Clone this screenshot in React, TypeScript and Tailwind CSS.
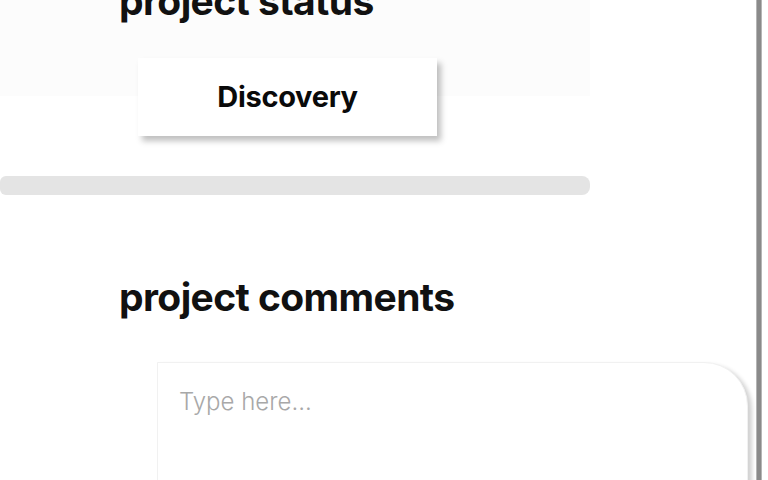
import React from "react";

const font = { fontFamily: "Inter, 'Noto Sans', sans-serif" };

export default function App() {
  return (
    <div className="flex h-[480px] w-[768px] overflow-hidden bg-white" style={font}>
      {/* main column */}
      <div className="flex w-[756px] flex-col">
        {/* project status */}
        <section className="w-[590px] shrink-0 bg-[linear-gradient(to_bottom,#fcfcfc_96px,#ffffff_96px)] pl-[119px]">
          <h2 className="-mt-[19px] text-[39px] font-bold leading-none tracking-[-0.6px] text-[#111111]">
            project status
          </h2>
          <button className="ml-[19px] mt-[38px] flex h-[78px] w-[299px] items-center justify-center bg-white text-[29px] font-bold tracking-[-0.3px] text-[#0a0a0a] shadow-[4px_5px_6px_rgba(0,0,0,0.25)]">
            Discovery
          </button>
        </section>

        {/* progress track */}
        <div className="mt-[40px] h-[19px] w-[590px] shrink-0 rounded-r-[8px] rounded-l-[6px] bg-[#e4e4e4]" />

        {/* project comments */}
        <section className="shrink-0 pl-[119px]">
          <h2 className="mt-[82px] text-[39px] font-bold leading-none tracking-[-0.6px] text-[#111111]">
            project comments
          </h2>
        </section>
        <textarea
          placeholder="Type here..."
          className="ml-[157px] mt-[46px] h-[160px] w-[591px] shrink-0 resize-none rounded-tr-[44px] border border-[#f1f1f1] bg-white pl-[21px] pt-[24px] text-[24px] font-light leading-[30px] text-[#333] shadow-[4px_3px_4px_rgba(0,0,0,0.18)] outline-none placeholder:text-[#a8a8a8]"
        />
      </div>

      {/* right edge rule */}
      <div className="w-[6px] shrink-0 border-x border-[#b5b5b5] bg-[#8a8a8a]" />
      <div className="flex-1 bg-white" />
    </div>
  );
}
